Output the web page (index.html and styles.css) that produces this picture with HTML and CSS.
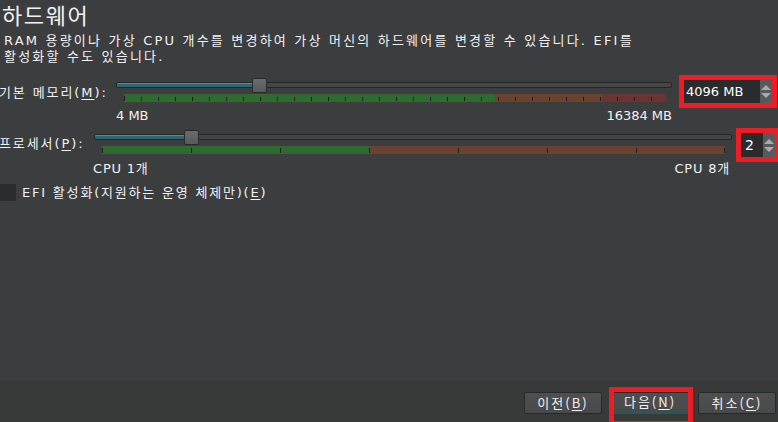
FILE: index.html
```html
<!DOCTYPE html>
<html lang="ko">
<head>
<meta charset="utf-8">
<title>하드웨어</title>
<link rel="stylesheet" href="styles.css">
</head>
<body>
<div class="dialog">
  <div class="main">
    <h1 class="title">하드웨어</h1>
    <p class="desc">RAM 용량이나 가상 CPU 개수를 변경하여 가상 머신의 하드웨어를 변경할 수 있습니다. EFI를<br>활성화할 수도 있습니다.</p>

    <div class="setting mem">
      <label class="label">기본 메모리(<u>M</u>):</label>
      <div class="slider-col">
        <div class="slider">
          <div class="groove"><div class="fill" style="width:137px"></div></div>
          <div class="handle" style="left:136px"></div>
        </div>
        <div class="ticks ticks-mem"></div>
        <div class="scale"><span>4 MB</span><span>16384 MB</span></div>
      </div>
      <div class="annot">
        <div class="spin">
          <span class="val">4096 MB</span>
          <div class="arrows"><span class="up"></span><span class="down"></span></div>
        </div>
      </div>
    </div>

    <div class="setting cpu">
      <label class="label">프로세서(<u>P</u>):</label>
      <div class="slider-col">
        <div class="slider">
          <div class="groove"><div class="fill" style="width:91px"></div></div>
          <div class="handle" style="left:90px"></div>
        </div>
        <div class="ticks ticks-cpu"></div>
        <div class="scale"><span>CPU 1개</span><span>CPU 8개</span></div>
      </div>
      <div class="annot">
        <div class="spin">
          <span class="val">2</span>
          <div class="arrows"><span class="up"></span><span class="down"></span></div>
        </div>
      </div>
    </div>

    <div class="check">
      <span class="box"></span>
      <span class="check-text">EFI 활성화(지원하는 운영 체제만)(<u>E</u>)</span>
    </div>
  </div>

  <div class="footer">
    <button class="btn">이전(<u>B</u>)</button>
    <span class="focus-wrap"><button class="btn btn-focus">다음(<u>N</u>)</button></span>
    <button class="btn">취소(<u>C</u>)</button>
  </div>
</div>
</body>
</html>
```

FILE: styles.css
```css
* { box-sizing: border-box; }
html, body {
  margin: 0;
  padding: 0;
  background: #3c3d3f;
  overflow: hidden;
}
body {
  font-family: "DejaVu Sans", "Noto Sans CJK KR", sans-serif;
  font-size: 13px;
  color: #f2f2f2;
}
u { text-decoration: underline; text-underline-offset: 2px; }

.dialog {
  width: 778px;
  height: 422px;
  display: flex;
  flex-direction: column;
  background: #3c3d3f;
  overflow: hidden;
}
.main {
  flex: 1;
  display: flex;
  flex-direction: column;
}
.title {
  margin: 0 0 0 2px;
  padding-top: 2px;
  font-family: "Noto Sans CJK KR", sans-serif;
  font-weight: normal;
  font-size: 22px;
  line-height: 24px;
  letter-spacing: 1.6px;
}
.desc {
  margin: 7px 0 0 4px;
  line-height: 16px;
  white-space: nowrap;
  letter-spacing: 2.2px;
}

.setting {
  display: flex;
  align-items: flex-start;
}
.mem { margin-top: 10px; }
.cpu { margin-top: 4px; }

.label {
  margin-left: -1px;
  line-height: 16px;
  white-space: nowrap;
  letter-spacing: 1.9px;
}
.mem .label { width: 117px; margin-top: 10px; }
.cpu .label { width: 95px; margin-top: 8px; }

.slider-col { display: flex; flex-direction: column; }
.mem .slider-col { width: 556px; margin-top: 3px; }
.cpu .slider-col { width: 638px; margin-top: 2px; }

.slider { position: relative; height: 15px; }
.groove {
  position: absolute;
  left: 0; right: 0;
  top: 4px;
  height: 6px;
  background: #444547;
  border: 1px solid #262728;
  border-radius: 2px;
  overflow: hidden;
}
.fill {
  height: 100%;
  background: linear-gradient(#4f8e9a 0 1px, #2b6874 1px);
}
.handle {
  position: absolute;
  top: 0;
  width: 15px;
  height: 15px;
  background: linear-gradient(#6a6b6d, #58595b);
  border: 1px solid #2a2a2a;
  border-radius: 2px;
}

.ticks {
  height: 8px;
  margin-top: 1px;
}
.ticks-mem {
  margin-left: 8px;
  margin-right: 6px;
  background:
    repeating-linear-gradient(90deg, transparent 0 16px, #1e1e1e 16px 17px) 1px 3px / 100% 4px no-repeat,
    linear-gradient(90deg, #1e1e1e 0 1px, transparent 1px) 0 2px / 100% 5px no-repeat,
    linear-gradient(90deg, #2f6a31 0 371px, #6a4330 371px 478px, #6a3433 478px);
}
.ticks-cpu {
  margin-left: 8px;
  margin-right: 7px;
  background:
    repeating-linear-gradient(90deg, #1e1e1e 0 1px, transparent 1px 89px) 0 2px / 100% 5px no-repeat,
    linear-gradient(90deg, transparent calc(100% - 1px), #1e1e1e calc(100% - 1px)) 0 2px / 100% 5px no-repeat,
    linear-gradient(90deg, #2f6a31 0 268px, #6a4330 268px);
}

.scale {
  display: flex;
  justify-content: space-between;
  line-height: 16px;
  white-space: nowrap;
}
.mem .scale { margin-top: 6px; }
.cpu .scale { margin-top: 7px; margin-left: -1px; margin-right: 2px; letter-spacing: 0.8px; }

.annot {
  border: 5px solid #ee1c25;
}
.mem .annot { width: 98px; height: 33px; margin-left: 7px; }
.cpu .annot { width: 42px; height: 34px; margin-left: 4px; border-right-width: 3px; }

.spin {
  height: 100%;
  display: flex;
  background: #2a2b2d;
}
.val {
  flex: 1;
  line-height: 23px;
  padding-left: 2px;
  font-size: 13px;
  color: #ffffff;
}
.cpu .val { font-size: 14px; padding-left: 4px; line-height: 24px; }
.arrows {
  width: 12px;
  background: #57595c;
  display: flex;
  flex-direction: column;
  justify-content: center;
  align-items: center;
  gap: 3px;
}
.up, .down {
  width: 0; height: 0;
  border-left: 5px solid transparent;
  border-right: 5px solid transparent;
}
.up { border-bottom: 5px solid #a9aaac; }
.down { border-top: 5px solid #a9aaac; }

.check {
  display: flex;
  align-items: center;
  margin-top: 7px;
}
.box {
  width: 17px;
  height: 17px;
  margin-left: -1px;
  background: #2b2c2e;
  border-radius: 1px;
}
.check-text {
  margin-left: 6px;
  line-height: 16px;
  letter-spacing: 1.8px;
}

.footer {
  height: 42px;
  background: #383a39;
  border-top: 1px solid #3a3b3c;
  display: flex;
  justify-content: flex-end;
  align-items: flex-start;
  padding-top: 11px;
  padding-right: 2px;
  gap: 9px;
}
.btn {
  width: 78px;
  height: 22px;
  padding: 0;
  font-family: "Noto Sans CJK KR", "DejaVu Sans", sans-serif;
  font-size: 13px;
  line-height: 18px;
  letter-spacing: 2px;
  color: #f2f2f2;
  background: linear-gradient(#4d4f51, #47494b);
  border: 1px solid #28292a;
  border-radius: 2px;
}
.focus-wrap {
  position: relative;
  display: block;
}
.focus-wrap::after {
  content: "";
  position: absolute;
  left: -2px;
  right: -4px;
  top: -5px;
  bottom: -12px;
  border: 5px solid #ee1c25;
}
.btn-focus {
  border-bottom: 3px solid #2b5758;
}
```
